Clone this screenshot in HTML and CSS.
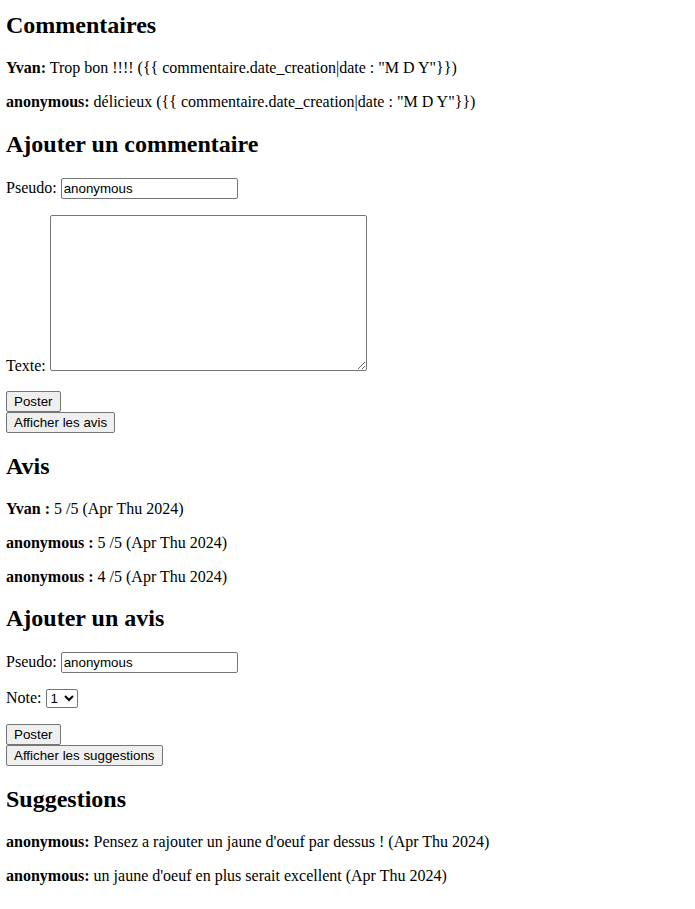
FILE: index.html
```html
<!DOCTYPE html>
<html lang="fr">
<head>
<meta charset="utf-8">
<title>Commentaires</title>
<link rel="stylesheet" href="styles.css">
</head>
<body>
<h2 class="first">Commentaires</h2>
<p><b>Yvan:</b> Trop bon !!!! ({{ commentaire.date_creation|date : "M D Y"}})</p>
<p><b>anonymous:</b> délicieux ({{ commentaire.date_creation|date : "M D Y"}})</p>

<h2>Ajouter un commentaire</h2>
<form class="form">
  <p>Pseudo: <input class="field" type="text" value="anonymous"></p>
  <p>Texte: <textarea class="area"></textarea></p>
  <button class="btn" type="button">Poster</button><br>
  <button class="btn" type="button">Afficher les avis</button>
</form>

<h2>Avis</h2>
<p><b>Yvan :</b> 5 /5 (Apr Thu 2024)</p>
<p><b>anonymous :</b> 5 /5 (Apr Thu 2024)</p>
<p><b>anonymous :</b> 4 /5 (Apr Thu 2024)</p>

<h2>Ajouter un avis</h2>
<form class="form">
  <p>Pseudo: <input class="field" type="text" value="anonymous"></p>
  <p>Note: <select class="sel"><option>1</option><option>2</option><option>3</option><option>4</option><option>5</option></select></p>
  <button class="btn" type="button">Poster</button><br>
  <button class="btn" type="button">Afficher les suggestions</button>
</form>

<h2>Suggestions</h2>
<p><b>anonymous:</b> Pensez a rajouter un jaune d'oeuf par dessus ! (Apr Thu 2024)</p>
<p><b>anonymous:</b> un jaune d'oeuf en plus serait excellent (Apr Thu 2024)</p>
</body>
</html>
```
FILE: styles.css
```css
html, body {
  background: #fff;
}
body {
  margin: 0 8px 8px 6px;
  font-family: "Liberation Serif", "Times New Roman", serif;
  font-size: 16px;
  color: #000;
}
h2 {
  font-size: 24px;
  margin: 19.92px 0;
}
h2.first {
  margin-top: 12px;
}
p {
  margin: 16px 0;
}
.form {
  margin: 0;
}
.field {
  font-family: "Liberation Sans", Arial, sans-serif;
  font-size: 13.33px;
  width: 177px;
  height: 21px;
  box-sizing: border-box;
  padding: 1px 2px;
  border: 1px solid #767676;
  border-radius: 2px;
}
.area {
  width: 317px;
  height: 156px;
  box-sizing: border-box;
  border: 1px solid #767676;
  border-radius: 2px;
  vertical-align: baseline;
}
.btn {
  font-family: "Liberation Sans", Arial, sans-serif;
  font-size: 13.33px;
  background: #efefef;
  border: 1px solid #767676;
  border-radius: 2px;
  padding: 1px 7px;
  color: #000;
  height: 21px;
}
.sel {
  font-family: "Liberation Sans", Arial, sans-serif;
  font-size: 13.33px;
  width: 32px;
  background: #fff;
  border: 1px solid #767676;
  border-radius: 2px;
  color: #000;
}
```
